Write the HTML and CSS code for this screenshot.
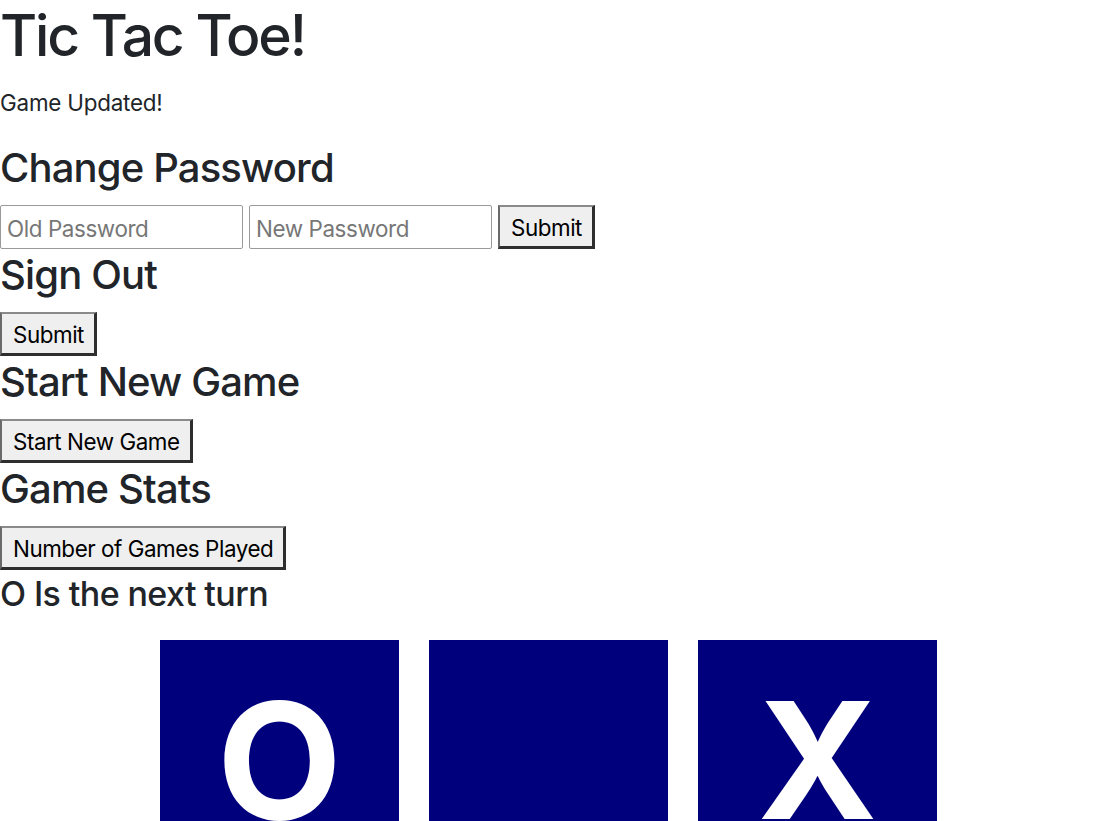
FILE: index.html
```html
<!DOCTYPE html>
<html lang="en">
<head>
<meta charset="utf-8">
<title>Tic Tac Toe!</title>
<link rel="stylesheet" href="styles.css">
</head>
<body>
  <h1 class="title">Tic Tac Toe!</h1>
  <p class="message">Game Updated!</p>

  <h3 class="section-title">Change Password</h3>
  <form class="pw-form">
    <input class="field" type="password" placeholder="Old Password">
    <input class="field" type="password" placeholder="New Password">
    <button class="btn" type="button">Submit</button>
  </form>

  <h3 class="section-title">Sign Out</h3>
  <div class="btn-row"><button class="btn" type="button">Submit</button></div>

  <h3 class="section-title">Start New Game</h3>
  <div class="btn-row"><button class="btn" type="button">Start New Game</button></div>

  <h3 class="section-title">Game Stats</h3>
  <div class="btn-row"><button class="btn" type="button">Number of Games Played</button></div>

  <h4 class="turn">O Is the next turn</h4>

  <div class="board">
    <div class="tile">O</div>
    <div class="tile"></div>
    <div class="tile">X</div>
  </div>
</body>
</html>
```

FILE: styles.css
```css
html, body {
  margin: 0;
  padding: 0;
  background: #ffffff;
}

body {
  font-family: Inter, "Noto Sans", "Liberation Sans", sans-serif;
  font-size: 22.4px;
  line-height: 1.5;
  color: #212529;
}

.title {
  margin: 2px 0 0;
  font-size: 57px;
  line-height: 68.4px;
  font-weight: 500;
  letter-spacing: -2.2px;
}

.message {
  margin: 16px 0 24px;
  font-size: 22.4px;
  line-height: 33.6px;
  letter-spacing: -0.2px;
}

.section-title {
  margin: 2px 0 13px;
  font-size: 40px;
  line-height: 48px;
  font-weight: 500;
  letter-spacing: -0.85px;
}

.pw-form {
  display: flex;
  gap: 6px;
  margin: 0;
}

.field {
  box-sizing: border-box;
  width: 243px;
  height: 44px;
  margin: 0;
  padding: 2px 6px 0;
  border: 1px solid #9a9a9a;
  border-radius: 2px;
  font-family: Inter, "Noto Sans", "Liberation Sans", sans-serif;
  font-size: 22.4px;
  letter-spacing: -0.4px;
  color: #212529;
  background: #fff;
}

.field::placeholder {
  color: #777777;
}

.btn-row {
  display: flex;
}

.btn {
  box-sizing: border-box;
  height: 44px;
  margin: 0;
  padding: 3px 10px 0 11px;
  border-style: solid;
  border-width: 2px 3px 3px 2px;
  border-color: #8a8a8a #2e2e2e #2e2e2e #6a6a6a;
  background: #efefef;
  color: #000;
  font-family: Inter, "Noto Sans", "Liberation Sans", sans-serif;
  font-size: 22.4px;
  letter-spacing: -0.45px;
  line-height: 1;
  border-radius: 0;
}

.turn {
  margin: 4px 0 25px;
  font-size: 34px;
  line-height: 40.8px;
  font-weight: 500;
  letter-spacing: -0.6px;
}

.board {
  display: flex;
  justify-content: center;
  gap: 30px;
}

.tile {
  box-sizing: border-box;
  width: 239px;
  height: 239px;
  padding-top: 2px;
  background: #00007d;
  color: #ffffff;
  font-family: Inter, "Liberation Sans", sans-serif;
  font-weight: 700;
  font-size: 162px;
  line-height: 237px;
  text-align: center;
}
```
